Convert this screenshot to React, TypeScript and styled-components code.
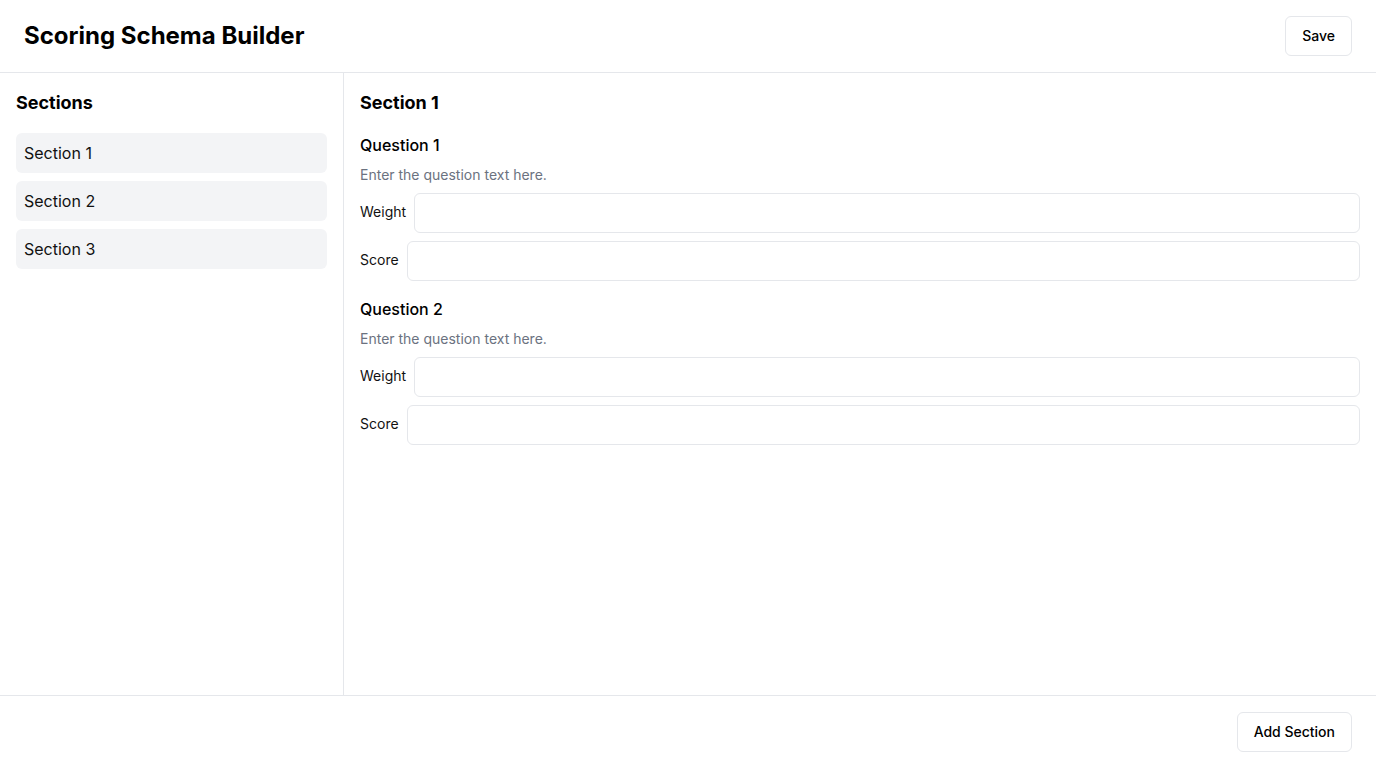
import React from "react";
import styled, { createGlobalStyle } from "styled-components";

const GlobalStyle = createGlobalStyle`
  * { box-sizing: border-box; }
  html, body { margin: 0; padding: 0; height: 100%; }
  body {
    font-family: Inter, "Noto Sans", sans-serif;
    color: #111827;
    background: #ffffff;
  }
  #root { height: 100%; }
`;

const Page = styled.div`
  display: flex;
  flex-direction: column;
  height: 100vh;
`;

const Header = styled.header`
  display: flex;
  align-items: center;
  justify-content: space-between;
  padding: 16px 24px;
  border-bottom: 1px solid #e5e7eb;
`;

const Title = styled.h1`
  margin: 0;
  font-size: 24px;
  line-height: 40px;
  font-weight: 700;
  color: #000;
`;

const Button = styled.button`
  height: 40px;
  padding: 0 16px 1px;
  background: #fff;
  border: 1px solid #e5e7eb;
  border-radius: 6px;
  font-family: inherit;
  font-size: 14px;
  font-weight: 500;
  color: #000;
  cursor: pointer;
`;

const Body = styled.div`
  flex: 1;
  display: flex;
  min-height: 0;
`;

const Sidebar = styled.aside`
  width: 344px;
  flex-shrink: 0;
  border-right: 1px solid #e5e7eb;
  padding: 16px;
`;

const PanelTitle = styled.h2`
  margin: 0 0 16px;
  font-size: 18px;
  line-height: 28px;
  font-weight: 700;
  color: #000;
`;

const SectionList = styled.div`
  display: flex;
  flex-direction: column;
  gap: 8px;
`;

const SectionItem = styled.div`
  height: 40px;
  display: flex;
  align-items: center;
  padding: 0 8px;
  background: #f3f4f6;
  border-radius: 6px;
  font-size: 16px;
  color: #111;
`;

const Main = styled.main`
  flex: 1;
  padding: 16px;
`;

const Question = styled.div`
  margin-bottom: 16px;
`;

const QuestionTitle = styled.h3`
  margin: 0 0 8px;
  font-size: 16px;
  line-height: 24px;
  font-weight: 500;
  color: #000;
`;

const QuestionText = styled.p`
  margin: 0 0 8px;
  font-size: 14px;
  line-height: 20px;
  color: #6b7280;
`;

const Fields = styled.div`
  display: flex;
  flex-direction: column;
  gap: 8px;
`;

const FieldRow = styled.label`
  display: flex;
  align-items: center;
  gap: 8px;
  font-size: 14px;
  line-height: 20px;
  color: #111;
`;

const FieldLabel = styled.span`
  padding-bottom: 2px;
`;

const Input = styled.input`
  flex: 1;
  height: 40px;
  border: 1px solid #e5e7eb;
  border-radius: 6px;
  padding: 0 12px;
  font-family: inherit;
  font-size: 14px;
  background: #fff;
  outline: none;
`;

const Footer = styled.footer`
  display: flex;
  justify-content: flex-end;
  padding: 16px 24px;
  border-top: 1px solid #e5e7eb;
`;

const questions = [
  { id: 1, title: "Question 1" },
  { id: 2, title: "Question 2" },
];

export default function App() {
  return (
    <>
      <GlobalStyle />
      <Page>
        <Header>
          <Title>Scoring Schema Builder</Title>
          <Button>Save</Button>
        </Header>
        <Body>
          <Sidebar>
            <PanelTitle>Sections</PanelTitle>
            <SectionList>
              {["Section 1", "Section 2", "Section 3"].map((s) => (
                <SectionItem key={s}>{s}</SectionItem>
              ))}
            </SectionList>
          </Sidebar>
          <Main>
            <PanelTitle>Section 1</PanelTitle>
            {questions.map((q) => (
              <Question key={q.id}>
                <QuestionTitle>{q.title}</QuestionTitle>
                <QuestionText>Enter the question text here.</QuestionText>
                <Fields>
                  <FieldRow>
                    <FieldLabel>Weight</FieldLabel>
                    <Input />
                  </FieldRow>
                  <FieldRow>
                    <FieldLabel>Score</FieldLabel>
                    <Input />
                  </FieldRow>
                </Fields>
              </Question>
            ))}
          </Main>
        </Body>
        <Footer>
          <Button>Add Section</Button>
        </Footer>
      </Page>
    </>
  );
}
